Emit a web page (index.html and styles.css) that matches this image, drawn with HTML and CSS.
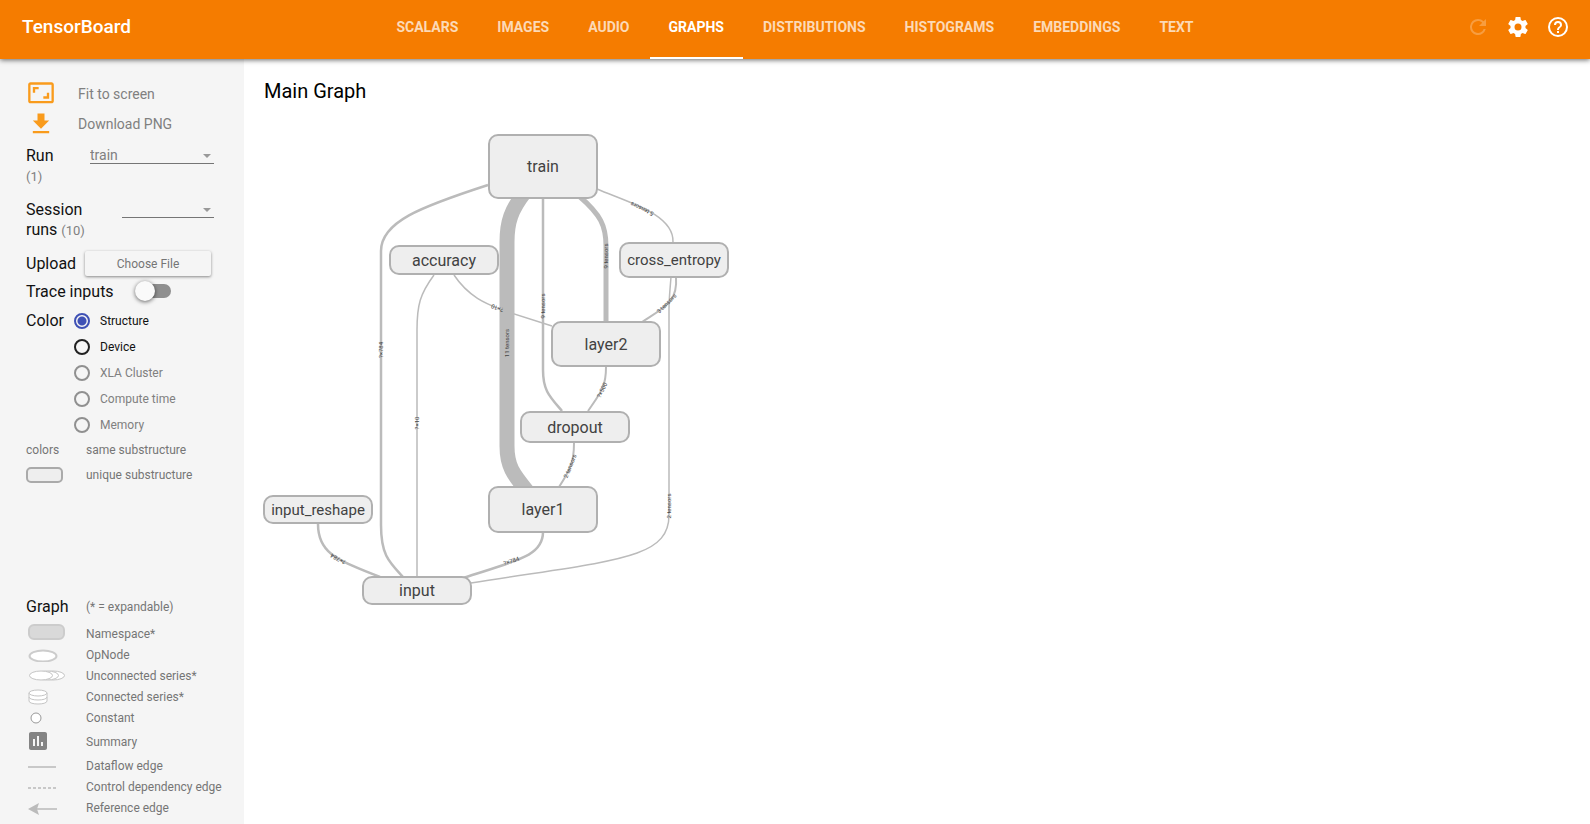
FILE: index.html
```html
<!DOCTYPE html>
<html lang="en">
<head>
<meta charset="utf-8">
<title>TensorBoard</title>
<link rel="stylesheet" href="styles.css">
</head>
<body>
<header class="toolbar">
  <h1 class="brand">TensorBoard</h1>
  <nav class="tabs">
    <a class="tab" href="#scalars">SCALARS</a>
    <a class="tab" href="#images">IMAGES</a>
    <a class="tab" href="#audio">AUDIO</a>
    <a class="tab tab-active" href="#graphs" aria-current="page">GRAPHS</a>
    <a class="tab" href="#distributions">DISTRIBUTIONS</a>
    <a class="tab" href="#histograms">HISTOGRAMS</a>
    <a class="tab" href="#embeddings">EMBEDDINGS</a>
    <a class="tab" href="#text">TEXT</a>
  </nav>
  <div class="actions">
    <button class="icon-button" type="button" aria-label="Reload" disabled><svg width="24" height="24" viewBox="0 0 24 24"><path d="M17.65 6.35A7.96 7.96 0 0 0 12 4a8 8 0 1 0 7.73 10h-2.08A6 6 0 1 1 12 6c1.66 0 3.14.69 4.22 1.78L13 11h7V4z"/></svg></button>
    <button class="icon-button" type="button" aria-label="Settings"><svg width="24" height="24" viewBox="0 0 24 24"><path d="M19.43 12.98c.04-.32.07-.64.07-.98s-.03-.66-.07-.98l2.11-1.65c.19-.15.24-.42.12-.64l-2-3.46c-.12-.22-.39-.3-.61-.22l-2.49 1c-.52-.4-1.08-.73-1.69-.98l-.38-2.65C14.46 2.18 14.25 2 14 2h-4c-.25 0-.46.18-.49.42l-.38 2.65c-.61.25-1.17.59-1.69.98l-2.49-1c-.23-.09-.49 0-.61.22l-2 3.46c-.13.22-.07.49.12.64l2.11 1.65c-.04.32-.07.65-.07.98s.03.66.07.98l-2.11 1.65c-.19.15-.24.42-.12.64l2 3.46c.12.22.39.3.61.22l2.49-1c.52.4 1.08.73 1.69.98l.38 2.65c.03.24.24.42.49.42h4c.25 0 .46-.18.49-.42l.38-2.65c.61-.25 1.17-.59 1.69-.98l2.49 1c.23.09.49 0 .61-.22l2-3.46c.12-.22.07-.49-.12-.64zM12 15.5A3.5 3.5 0 1 1 12 8.500a3.500 3.500 0 0 1 0 7z"/></svg></button>
    <button class="icon-button" type="button" aria-label="Help"><svg width="24" height="24" viewBox="0 0 24 24"><path d="M11 18h2v-2h-2zM12 2a10 10 0 1 0 0 20 10 10 0 0 0 0-20zm0 18a8 8 0 1 1 0-16 8 8 0 0 1 0 16zm0-14a4 4 0 0 0-4 4h2a2 2 0 1 1 4 0c0 2-3 1.750-3 5h2c0-2.250 3-2.500 3-5a4 4 0 0 0-4-4z"/></svg></button>
  </div>
</header>

<div class="layout">
  <aside class="sidebar">
    <button class="command" type="button">
      <svg class="command-icon" width="28" height="28" viewBox="0 0 24 24"><path d="M19 11h-2v3h-3v2h5zM7 8h3V6H5v5h2zm14-6H3c-1.100 0-2 .9-2 2v14c0 1.100.9 2 2 2h18c1.100 0 2-.9 2-2V4c0-1.100-.9-2-2-2zm0 16H3V4h18z"/></svg>
      <span>Fit to screen</span>
    </button>
    <button class="command" type="button">
      <svg class="command-icon" width="28" height="28" viewBox="0 0 24 24"><path d="M19 9h-4V3H9v6H5l7 7zM5 18v2h14v-2z"/></svg>
      <span>Download PNG</span>
    </button>

    <div class="field">
      <label class="field-name" for="run">Run <small>(1)</small></label>
      <span class="picker picker-wide">
        <select id="run"><option>train</option></select>
        <svg class="caret" width="8" height="4" viewBox="0 0 8 4"><path d="M0 0h8L4 4z"/></svg>
      </span>
    </div>
    <div class="field">
      <label class="field-name field-name-wide" for="session">Session<br>runs <small>(10)</small></label>
      <span class="picker">
        <select id="session"><option></option></select>
        <svg class="caret" width="8" height="4" viewBox="0 0 8 4"><path d="M0 0h8L4 4z"/></svg>
      </span>
    </div>

    <div class="control">
      <span id="upload-name">Upload</span>
      <button class="file-button" type="button" aria-describedby="upload-name">Choose File</button>
    </div>
    <div class="control">
      <label for="trace">Trace inputs</label>
      <input class="switch" id="trace" type="checkbox" role="switch">
    </div>

    <fieldset class="color-by">
      <legend>Color</legend>
      <div class="choices">
        <label class="choice"><input type="radio" name="color" checked>Structure</label>
        <label class="choice"><input type="radio" name="color">Device</label>
        <label class="choice choice-off"><input type="radio" name="color" disabled>XLA Cluster</label>
        <label class="choice choice-off"><input type="radio" name="color" disabled>Compute time</label>
        <label class="choice choice-off"><input type="radio" name="color" disabled>Memory</label>
      </div>
    </fieldset>
    <dl class="key key-colors">
      <dt>colors</dt><dd>same substructure</dd>
      <dt><span class="swatch"></span></dt><dd>unique substructure</dd>
    </dl>

    <section class="legend">
      <div class="legend-head"><h2>Graph</h2><span>(* = expandable)</span></div>
      <dl class="key">
        <dt><svg width="40" height="20"><rect class="k-namespace" x="3" y="1" width="35" height="14" rx="5"/></svg></dt><dd>Namespace*</dd>
        <dt><svg width="40" height="14"><ellipse class="k-shape" cx="17" cy="8" rx="13.500" ry="5.500"/></svg></dt><dd>OpNode</dd>
        <dt><svg width="40" height="12"><ellipse class="k-thin" cx="27" cy="5.500" rx="11.500" ry="4.500"/><ellipse class="k-thin" cx="21" cy="5.500" rx="11.500" ry="4.500"/><ellipse class="k-thin" cx="15" cy="5.500" rx="11.500" ry="4.500"/></svg></dt><dd>Unconnected series*</dd>
        <dt><svg width="40" height="16"><path class="k-thin" d="M3 4v8c0 4 18 4 18 0V4"/><path class="k-line" d="M3 8c0 4 18 4 18 0"/><ellipse class="k-thin" cx="12" cy="4" rx="9" ry="3"/></svg></dt><dd>Connected series*</dd>
        <dt><svg width="40" height="12"><circle class="k-constant" cx="10" cy="6" r="5"/></svg></dt><dd>Constant</dd>
        <dt class="tall"><svg width="24" height="24" viewBox="0 0 24 24"><path class="k-summary" d="M19 2H5c-1.100 0-2 .9-2 2v14c0 1.100.9 2 2 2h14c1.100 0 2-.9 2-2V4c0-1.100-.9-2-2-2zM9 16H7V9h2zm4 0h-2V6h2zm4 0h-2v-4h2z"/></svg></dt><dd class="tall">Summary</dd>
        <dt><svg width="40" height="12"><path class="k-edge" d="M2 7h28"/></svg></dt><dd>Dataflow edge</dd>
        <dt><svg width="40" height="12"><path class="k-edge k-dashed" d="M2 7h28"/></svg></dt><dd>Control dependency edge</dd>
        <dt><svg width="40" height="14"><path class="k-edge" d="M8 8h23"/><path class="k-head" d="M2 8l11-6-2 6 2 6z"/></svg></dt><dd>Reference edge</dd>
      </dl>
    </section>
  </aside>

  <main class="board">
    <h2 class="board-title">Main Graph</h2>
    <svg class="graph" width="500" height="500" viewBox="250 120 500 500" role="img" aria-label="Main Graph">
      <g class="edges">
        <path class="w-thin" d="M454 275C470 299 490 305 505 311L552 326"/>
        <path class="w-thin" d="M434 275C420 294 417 305 417 330V577"/>
        <path class="w-mid" d="M488 185C420 207 381 222 381 251V525C381 555 389 562 403 577"/>
        <path class="w-huge" d="M525 192C511 210 507 222 507 242V446C507 466 513 474 527 491"/>
        <path class="w-mid" d="M543 198V370C543 391 550 397 562 411"/>
        <path class="w-wide" d="M579 196C601 215 606 226 606 246V322"/>
        <path class="w-thin" d="M597 189C627 202 674 214 673 242"/>
        <path class="w-base" d="M676 277C678 302 665 307 642 322"/>
        <path class="w-thin" d="M671 277C670 290 669 298 669 310V515C669 560 614 560 471 583"/>
        <path class="w-base" d="M606 367C606 387 601 392 588 411"/>
        <path class="w-base" d="M574 443C574 463 570 470 559 487"/>
        <path class="w-mid" d="M543 532C543 556 518 560 463 578"/>
        <path class="w-mid" d="M318 524C318 554 338 560 380 577"/>
      </g>
      <g class="edge-labels">
        <text transform="translate(383 350) rotate(-90)">?×784</text>
        <text transform="translate(419 423) rotate(-90)">?×10</text>
        <text transform="translate(509 343) rotate(-90)">11 tensors</text>
        <text transform="translate(545 306) rotate(-90)">9 tensors</text>
        <text transform="translate(608 256) rotate(-90)">9 tensors</text>
        <text transform="translate(671 506) rotate(-90)">2 tensors</text>
        <text transform="translate(643 207) rotate(206)">5 tensors</text>
        <text transform="translate(498 306) rotate(201)">?×10</text>
        <text transform="translate(668 305) rotate(-45)">3 tensors</text>
        <text transform="translate(604 391) rotate(-64)">?×500</text>
        <text transform="translate(572 467) rotate(-68)">2 tensors</text>
        <text transform="translate(512 563) rotate(-18)">?×784</text>
        <text transform="translate(339 557) rotate(207)">?×784</text>
      </g>
      <g class="nodes">
        <rect x="489" y="135" width="108" height="63" rx="9"/><text x="543" y="172">train</text>
        <rect x="390" y="246" width="108" height="28" rx="9"/><text x="444" y="266">accuracy</text>
        <rect x="620" y="243" width="108" height="34" rx="9"/><text class="small" x="674" y="265">cross_entropy</text>
        <rect x="552" y="322" width="108" height="44" rx="9"/><text x="606" y="350">layer2</text>
        <rect x="521" y="412" width="108" height="30" rx="9"/><text x="575" y="433">dropout</text>
        <rect x="489" y="487" width="108" height="45" rx="9"/><text x="543" y="515">layer1</text>
        <rect x="264" y="496" width="108" height="27" rx="9"/><text class="small" x="318" y="515">input_reshape</text>
        <rect x="363" y="577" width="108" height="27" rx="9"/><text x="417" y="596">input</text>
      </g>
    </svg>
  </main>
</div>
</body>
</html>
```
FILE: styles.css
```css
* { box-sizing: border-box; }

body {
  margin: 0;
  min-height: 100vh;
  display: flex;
  flex-direction: column;
  font-family: Roboto, "Liberation Sans", sans-serif;
  color: #111;
  background: #fff;
}

button, select, input { font: inherit; color: inherit; margin: 0; }
button { border: 0; background: none; padding: 0; cursor: pointer; }
h1, h2, dl, dd { margin: 0; font-weight: 400; }

/* Toolbar */
.toolbar {
  position: relative;
  display: grid;
  grid-template-columns: 1fr auto 1fr;
  height: 59px;
  padding: 0 20px 0 20px;
  background: #f57c00;
  color: #fff;
  box-shadow: 0 1px 5px rgba(0, 0, 0, .6);
}
.brand { padding-left: 2px; font-size: 19px; font-weight: 500; line-height: 54px; }
.tabs { display: flex; gap: 1px; }
.tab {
  padding: 0 19px;
  border-bottom: 2px solid transparent;
  font-size: 14px;
  font-weight: 700;
  line-height: 54px;
  color: rgba(255, 255, 255, .72);
  text-decoration: none;
}
.tab-active { color: #fff; border-bottom-color: #fff; }
.actions { display: flex; justify-content: flex-end; gap: 16px; height: 54px; align-items: center; }
.icon-button { display: flex; fill: #fff; }
.icon-button:disabled { opacity: .25; }

.layout { flex: 1; display: flex; }

/* Sidebar */
.sidebar {
  flex: none;
  width: 244px;
  display: flex;
  flex-direction: column;
  padding: 20px 20px 6px 26px;
  background: #f5f5f5;
}
.command {
  display: grid;
  grid-template-columns: 51px 1fr;
  align-items: center;
  height: 30px;
  padding-left: 1px;
  font-size: 14px;
  text-align: left;
  color: #808080;
}
.command-icon { fill: #f99b1c; }
.field {
  display: flex;
  justify-content: space-between;
  align-items: flex-start;
  padding-right: 10px;
  margin-top: 7px;
  font-size: 16px;
  line-height: 20px;
}
.field + .field { margin-top: 13px; }
.field-name { width: 40px; }
.field-name-wide { width: 70px; }
small { font-size: 13px; color: #808080; white-space: nowrap; }
.picker { position: relative; width: 92px; }
.picker-wide { width: 124px; }
.picker select {
  display: block;
  width: 100%;
  height: 18px;
  padding: 1px 0 0;
  border: 0;
  border-bottom: 1px solid #757575;
  border-radius: 0;
  appearance: none;
  background: none;
  font-size: 14px;
  line-height: 17px;
  color: #808080;
}
.caret { position: absolute; right: 3px; top: 8px; fill: #999; }

.control { display: flex; align-items: center; height: 28px; font-size: 16px; gap: 9px; }
.field + .control { margin-top: 8px; }
.file-button {
  flex: 1;
  height: 25px;
  margin-right: 13px;
  padding-top: 2px;
  border-radius: 2px;
  font-size: 12px;
  color: #757575;
  box-shadow: 0 1px 3px rgba(0, 0, 0, .45);
}
.switch {
  appearance: none;
  position: relative;
  width: 32px;
  height: 14px;
  margin-left: 16px;
  border-radius: 7px;
  background: #8f8f8f;
}
.switch::before {
  content: "";
  position: absolute;
  left: -4px;
  top: -3px;
  width: 20px;
  height: 20px;
  border-radius: 50%;
  background: #fafafa;
  box-shadow: 0 1px 4px rgba(0, 0, 0, .6);
}

.color-by { display: flex; border: 0; margin: 3px 0 0; padding: 0; min-width: 0; }
.color-by legend { float: left; width: 48px; padding: 0; font-size: 16px; line-height: 26px; }
.choice { display: flex; align-items: center; gap: 10px; height: 26px; font-size: 12px; }
.choice-off { color: #808080; }
.choice input {
  appearance: none;
  width: 16px;
  height: 16px;
  border: 2px solid #212121;
  border-radius: 50%;
}
.choice input:checked { border-color: #3f51b5; background: radial-gradient(#3f51b5 4px, transparent 5px); }
.choice input:disabled { border-color: #909090; }

.key {
  display: grid;
  grid-template-columns: 60px 1fr;
  grid-auto-rows: minmax(21px, auto);
  align-items: center;
  font-size: 12px;
  color: #757575;
}
.key dt, .key dd { display: flex; align-items: center; white-space: nowrap; }
.key-colors { grid-auto-rows: 25px; margin-top: -1px; }
.tall { height: 27px; }
.swatch { width: 37px; height: 16px; border: 2px solid #aaa; border-radius: 5px; background: #eee; }
.legend { margin-top: auto; }
.legend-head { display: grid; grid-template-columns: 60px 1fr; align-items: center; margin-bottom: 4px; font-size: 12px; color: #757575; }
.legend-head h2 { font-size: 16px; line-height: 24px; color: #111; }
.k-namespace { fill: #d9d9d9; stroke: #ccc; stroke-width: 2; }
.k-shape { fill: #fff; stroke: #ccc; stroke-width: 2; }
.k-thin { fill: #fff; stroke: #c4c4c4; }
.k-line { fill: none; stroke: #c4c4c4; }
.k-constant { fill: #fff; stroke: #999; }
.k-summary { fill: #848484; }
.k-edge { fill: none; stroke: #c8c8c8; stroke-width: 2; }
.k-dashed { stroke-dasharray: 3 2; }
.k-head { fill: #bbb; }

/* Graph */
.board { flex: 1; min-width: 0; padding: 20px 20px 0 6px; }
.board-title { padding-left: 14px; font-size: 20px; line-height: 24px; color: #000; }
.graph { display: block; margin-top: 17px; }
.edges path { fill: none; stroke: #bbb; }
.edges .w-thin { stroke-width: 1.5px; }
.edges .w-base { stroke-width: 2px; }
.edges .w-mid { stroke-width: 2.5px; }
.edges .w-wide { stroke-width: 5px; }
.edges .w-huge { stroke-width: 15px; }
.edge-labels text { font-size: 6px; fill: #444; text-anchor: middle; }
.nodes rect { fill: #eee; stroke: #b0b0b0; stroke-width: 2px; }
.nodes text { font-size: 16px; fill: #424242; text-anchor: middle; }
.nodes .small { font-size: 15px; }
```
